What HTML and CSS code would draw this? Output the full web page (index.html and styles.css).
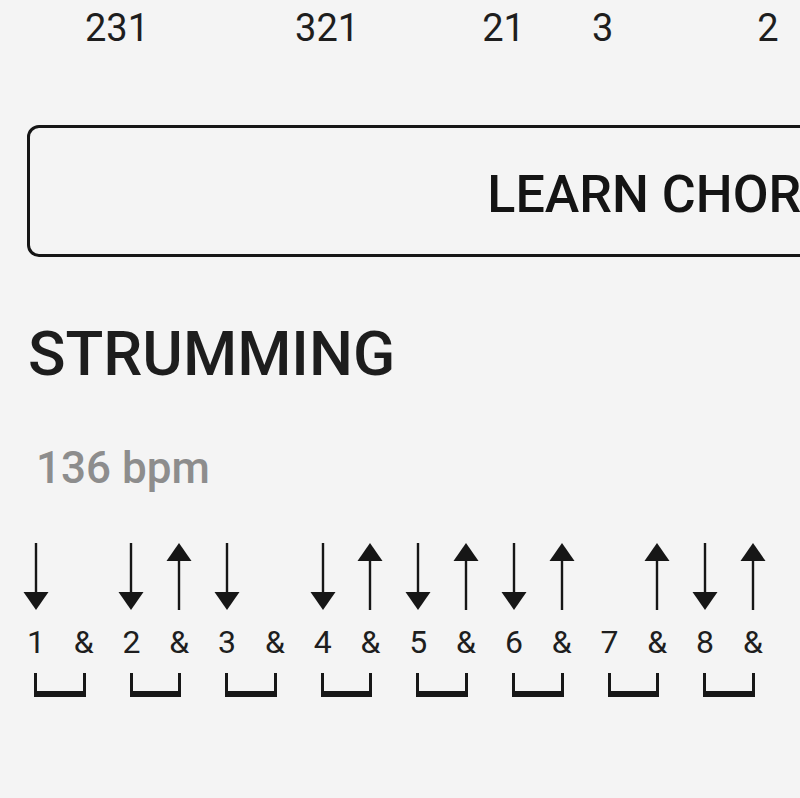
FILE: index.html
```html
<!DOCTYPE html>
<html lang="en">
<head>
    <meta charset="UTF-8">
    <meta name="viewport" content="width=device-width, initial-scale=1.0">
    <title>Strumming</title>
    <link rel="stylesheet" href="styles.css">
</head>
<body>

    <div class="fingers">
        <span>231</span>
        <span>321</span>
        <span>21</span>
        <span>3</span>
        <span>2</span>
    </div>

    <div class="learn-btn">LEARN CHORDS</div>

    <h2 class="section-title">STRUMMING</h2>

    <div class="bpm">136 bpm</div>

    <div class="pattern">
        <!-- arrows: D . D U D . D U D U D U . U D U -->
        <div class="stroke"><svg class="down" viewBox="0 0 26 67"><rect x="11.8" y="0" width="2.4" height="52"/><polygon points="0.5,49 25.5,49 13,67"/></svg></div>
        <div class="stroke"></div>
        <div class="stroke"><svg class="down" viewBox="0 0 26 67"><rect x="11.8" y="0" width="2.4" height="52"/><polygon points="0.5,49 25.5,49 13,67"/></svg></div>
        <div class="stroke"><svg class="up" viewBox="0 0 26 67"><rect x="11.8" y="15" width="2.4" height="52"/><polygon points="13,0 0.5,18 25.5,18"/></svg></div>
        <div class="stroke"><svg class="down" viewBox="0 0 26 67"><rect x="11.8" y="0" width="2.4" height="52"/><polygon points="0.5,49 25.5,49 13,67"/></svg></div>
        <div class="stroke"></div>
        <div class="stroke"><svg class="down" viewBox="0 0 26 67"><rect x="11.8" y="0" width="2.4" height="52"/><polygon points="0.5,49 25.5,49 13,67"/></svg></div>
        <div class="stroke"><svg class="up" viewBox="0 0 26 67"><rect x="11.8" y="15" width="2.4" height="52"/><polygon points="13,0 0.5,18 25.5,18"/></svg></div>
        <div class="stroke"><svg class="down" viewBox="0 0 26 67"><rect x="11.8" y="0" width="2.4" height="52"/><polygon points="0.5,49 25.5,49 13,67"/></svg></div>
        <div class="stroke"><svg class="up" viewBox="0 0 26 67"><rect x="11.8" y="15" width="2.4" height="52"/><polygon points="13,0 0.5,18 25.5,18"/></svg></div>
        <div class="stroke"><svg class="down" viewBox="0 0 26 67"><rect x="11.8" y="0" width="2.4" height="52"/><polygon points="0.5,49 25.5,49 13,67"/></svg></div>
        <div class="stroke"><svg class="up" viewBox="0 0 26 67"><rect x="11.8" y="15" width="2.4" height="52"/><polygon points="13,0 0.5,18 25.5,18"/></svg></div>
        <div class="stroke"></div>
        <div class="stroke"><svg class="up" viewBox="0 0 26 67"><rect x="11.8" y="15" width="2.4" height="52"/><polygon points="13,0 0.5,18 25.5,18"/></svg></div>
        <div class="stroke"><svg class="down" viewBox="0 0 26 67"><rect x="11.8" y="0" width="2.4" height="52"/><polygon points="0.5,49 25.5,49 13,67"/></svg></div>
        <div class="stroke"><svg class="up" viewBox="0 0 26 67"><rect x="11.8" y="15" width="2.4" height="52"/><polygon points="13,0 0.5,18 25.5,18"/></svg></div>

        <div class="count">1</div><div class="count">&amp;</div>
        <div class="count">2</div><div class="count">&amp;</div>
        <div class="count">3</div><div class="count">&amp;</div>
        <div class="count">4</div><div class="count">&amp;</div>
        <div class="count">5</div><div class="count">&amp;</div>
        <div class="count">6</div><div class="count">&amp;</div>
        <div class="count">7</div><div class="count">&amp;</div>
        <div class="count">8</div><div class="count">&amp;</div>

        <div class="beat"></div>
        <div class="beat"></div>
        <div class="beat"></div>
        <div class="beat"></div>
        <div class="beat"></div>
        <div class="beat"></div>
        <div class="beat"></div>
        <div class="beat"></div>
    </div>

</body>
</html>
```

FILE: styles.css
```css
body {
    font-family: Roboto, "Liberation Sans", sans-serif;
    background-color: #f4f4f4;
    color: #1b1b1b;
    margin: 0;
    overflow: hidden;
}

/* finger numbers under the chord diagrams */
.fingers {
    display: flex;
    padding-top: 9px;
    font-size: 38px;
    line-height: 38px;
    color: #1e1e1e;
}
.fingers span:nth-child(1) { margin-left: 85px; }
.fingers span:nth-child(2) { margin-left: 146px; }
.fingers span:nth-child(3) { margin-left: 123px; }
.fingers span:nth-child(4) { margin-left: 67px; }
.fingers span:nth-child(5) { margin-left: 144px; }

.learn-btn {
    display: flex;
    align-items: center;
    justify-content: center;
    box-sizing: border-box;
    width: 1300px;
    height: 132px;
    margin: 78px 0 0 27px;
    padding-top: 6px;
    border: 3px solid #151515;
    border-radius: 12px;
    font-size: 52px;
    font-weight: 500;
    color: #141414;
}

.section-title {
    margin: 65px 0 0 28px;
    font-size: 62px;
    line-height: 63px;
    font-weight: 500;
    color: #1d1d1d;
}

.bpm {
    margin: 61px 0 0 36px;
    font-size: 44px;
    line-height: 44px;
    font-weight: 500;
    color: #8d8d8d;
}

/* strumming grid: 16 half beats */
.pattern {
    display: grid;
    grid-template-columns: repeat(16, 47.8px);
    margin: 53px 0 0 12px;
}
.stroke {
    height: 67px;
    display: flex;
    justify-content: center;
}
.stroke svg {
    width: 26px;
    height: 67px;
    fill: #161616;
}
.count {
    margin-top: 16px;
    text-align: center;
    font-size: 32px;
    line-height: 32px;
    color: #1e1e1e;
}
.beat {
    grid-column: span 2;
    box-sizing: border-box;
    height: 24px;
    margin: 15px 22px 0 22px;
    border: 3px solid #171717;
    border-top: none;
    border-bottom-width: 6px;
}
```
